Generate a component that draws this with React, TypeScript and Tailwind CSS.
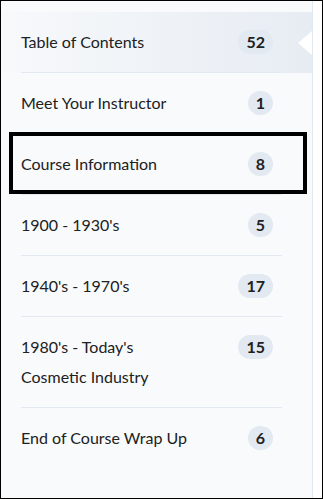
import React from 'react'

type Item = { title: string; count: number; active?: boolean }

const items: Item[] = [
  { title: 'Table of Contents', count: 52, active: true },
  { title: 'Meet Your Instructor', count: 1 },
  { title: 'Course Information', count: 8 },
  { title: "1900 - 1930's", count: 5 },
  { title: "1940's - 1970's", count: 17 },
  { title: "1980's - Today's Cosmetic Industry", count: 15 },
  { title: 'End of Course Wrap Up', count: 6 },
]

function Row({ item, last }: { item: Item; last?: boolean }) {
  return (
    <div
      className={
        last
          ? 'flex items-start justify-between py-[15px] pr-[9px]'
          : 'flex items-start justify-between border-b border-[#e3e9f1] py-[15px] pr-[9px]'
      }
    >
      <span className="max-w-[178px] text-[16px] leading-[30px] text-[#202122]">{item.title}</span>
      <span className="mt-[3px] flex h-[24px] min-w-[24px] items-center justify-center rounded-full bg-[#e3e9f1] px-[8px] text-[16px] font-bold text-[#202122]">
        {item.count}
      </span>
    </div>
  )
}

export default function App() {
  return (
    <div
      className="relative h-[499px] w-[323px] overflow-hidden border border-black bg-white"
      style={{ fontFamily: 'Lato, "Noto Sans", sans-serif' }}
    >
      <nav className="h-full w-[312px] border-r border-[#e3e9f1] bg-[#f9fafc] pt-[11px]">
        {items.map((item, i) =>
          item.active ? (
            <div key={item.title} className="relative bg-gradient-to-r from-[#f7f9fb] to-[#e7ecf3]">
              <div className="ml-[20px] mr-[30px]">
                <Row item={item} />
              </div>
              {/* notch pointing at the content */}
              <svg className="absolute right-0 top-[19px]" width="14" height="24" viewBox="0 0 14 24">
                <polygon points="14,0 0,12 14,24" fill="#ffffff" />
              </svg>
            </div>
          ) : (
            <div key={item.title} className="ml-[20px] mr-[30px]">
              <Row item={item} last={i === items.length - 1} />
            </div>
          ),
        )}
      </nav>

      {/* highlight box drawn over the screenshot */}
      <div className="pointer-events-none absolute left-[8px] top-[131px] h-[62px] w-[298px] border-[4px] border-black" />
    </div>
  )
}
